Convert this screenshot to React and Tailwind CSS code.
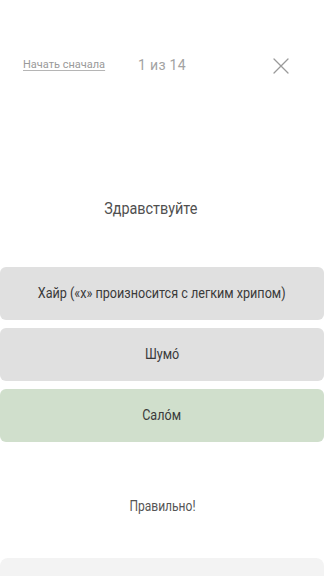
import React from 'react'

export default function App() {
  const options = [
    { text: 'Хайр («х» произносится с легким хрипом)', correct: false },
    { text: 'Шумо\u0301', correct: false },
    { text: 'Сало\u0301м', correct: true },
  ]

  return (
    <div className="min-h-[576px] bg-white flex flex-col overflow-hidden font-['Roboto','Liberation_Sans',sans-serif]">
      {/* Header */}
      <div className="mt-[52px] h-[26px] grid grid-cols-[1fr_auto_1fr] items-center">
        <button className="justify-self-start pl-[23px] text-[11px] text-[#9a9a9a] underline underline-offset-2 decoration-[#b5b5b5]">
          Начать сначала
        </button>
        <div className="text-[14px] text-[#a3a3a3] tracking-[0.3px]">1 из 14</div>
        <button className="justify-self-end mr-[35px] mt-[2px] w-[16px] h-[16px] text-[#9a9a9a]">
          <svg viewBox="0 0 16 16" className="w-full h-full" fill="none" stroke="currentColor" strokeWidth="1.3" strokeLinecap="round">
            <path d="M1 1 L15 15 M15 1 L1 15" />
          </svg>
        </button>
      </div>

      {/* Prompt */}
      <div className="mt-[119px] pr-[22px] text-center text-[16px] leading-[24px] text-[#505050]">
        <span className="inline-block scale-x-[0.9]">Здравствуйте</span>
      </div>

      {/* Options */}
      <div className="mt-[46px] flex flex-col gap-[8px]">
        {options.map((o) => (
          <button
            key={o.text}
            className={`h-[53px] w-full rounded-[6px] text-[14px] text-[#3a3a3a] ${o.correct ? 'bg-[#d0dfcc]' : 'bg-[#e0e0e0]'}`}
          >
            <span className="inline-block whitespace-nowrap scale-x-[0.9]">{o.text}</span>
          </button>
        ))}
      </div>

      {/* Feedback */}
      <div className="mt-[54px] text-center text-[14px] leading-[20px] text-[#555]">
        <span className="inline-block scale-x-[0.86]">Правильно!</span>
      </div>

      <div className="mt-[42px] h-[40px] rounded-t-[8px] bg-[#f3f3f3]" />
    </div>
  )
}
